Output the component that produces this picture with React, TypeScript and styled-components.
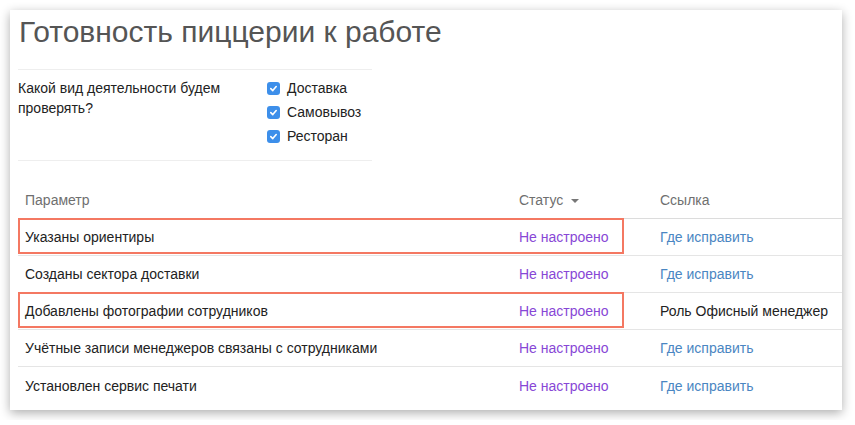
import styled, { createGlobalStyle } from 'styled-components';

const GlobalStyle = createGlobalStyle`
  html, body {
    margin: 0;
    padding: 0;
    background: #fff;
  }
  body {
    font-family: 'Liberation Sans', Arial, sans-serif;
    color: #222;
  }
`;

const Card = styled.div`
  margin: 10px;
  width: 832px;
  height: 400px;
  box-sizing: border-box;
  padding-left: 8px;
  background: #fff;
  box-shadow: 0 3px 10px rgba(0, 0, 0, 0.32);
  overflow: hidden;
`;

const Title = styled.h1`
  margin: 5px 0 0 1px;
  font-size: 30px;
  line-height: 33px;
  font-weight: 400;
  color: #555;
`;

const Filter = styled.div`
  margin-top: 21px;
  width: 354px;
  display: grid;
  grid-template-columns: 249px 1fr;
  padding: 6px 0 12px;
  border-top: 1px solid #eee;
  border-bottom: 1px solid #eee;
`;

const Question = styled.div`
  width: 230px;
  margin-top: 2px;
  font-size: 14px;
  line-height: 20px;
`;

const Options = styled.div`
  display: flex;
  flex-direction: column;
`;

const Option = styled.label`
  height: 24px;
  display: flex;
  align-items: center;
  gap: 7px;
  font-size: 14px;
`;

const Check = styled.span`
  width: 13px;
  height: 13px;
  border-radius: 3px;
  background: #3d8fea;
  display: flex;
  align-items: center;
  justify-content: center;
`;

const Table = styled.div`
  margin-top: 21px;
  font-size: 14px;
  line-height: 20px;
`;

const Row = styled.div<{ $head?: boolean }>`
  position: relative;
  display: grid;
  grid-template-columns: 494px 141px 1fr;
  height: 37px;
  box-sizing: border-box;
  align-items: center;
  border-bottom: 1px solid ${(p) => (p.$head ? '#dcdcdc' : '#e5e5e5')};
  color: ${(p) => (p.$head ? '#6f6f6f' : '#222')};
  &:last-child {
    border-bottom: none;
  }
`;

const Cell = styled.div<{ $tone?: 'status' | 'link' | 'plain' }>`
  padding: 0 7px;
  white-space: nowrap;
  display: flex;
  align-items: center;
  color: ${(p) =>
    p.$tone === 'status' ? '#8847d6' : p.$tone === 'link' ? '#4a86c2' : 'inherit'};
`;

const Caret = styled.span`
  margin-left: 8px;
  margin-top: 2px;
  width: 0;
  height: 0;
  border-left: 4px solid transparent;
  border-right: 4px solid transparent;
  border-top: 4px solid #777;
`;

const Highlight = styled.div`
  position: absolute;
  left: 0;
  top: -1px;
  width: 606px;
  height: 36px;
  box-sizing: border-box;
  border: 2px solid #f47862;
  pointer-events: none;
`;

const CheckMark = () => (
  <svg width="9" height="9" viewBox="0 0 10 10">
    <path d="M2 5.2 L4.2 7.3 L8 2.8" fill="none" stroke="#fff" strokeWidth="1.8" strokeLinecap="round" strokeLinejoin="round" />
  </svg>
);

const options = ['Доставка', 'Самовывоз', 'Ресторан'];

const rows: { name: string; link: string; isLink: boolean; marked: boolean }[] = [
  { name: 'Указаны ориентиры', link: 'Где исправить', isLink: true, marked: true },
  { name: 'Созданы сектора доставки', link: 'Где исправить', isLink: true, marked: false },
  { name: 'Добавлены фотографии сотрудников', link: 'Роль Офисный менеджер', isLink: false, marked: true },
  { name: 'Учётные записи менеджеров связаны с сотрудниками', link: 'Где исправить', isLink: true, marked: false },
  { name: 'Установлен сервис печати', link: 'Где исправить', isLink: true, marked: false },
];

export default function App() {
  return (
    <>
      <GlobalStyle />
      <Card>
        <Title>Готовность пиццерии к работе</Title>
        <Filter>
          <Question>Какой вид деятельности будем проверять?</Question>
          <Options>
            {options.map((o) => (
              <Option key={o}>
                <Check>
                  <CheckMark />
                </Check>
                {o}
              </Option>
            ))}
          </Options>
        </Filter>
        <Table>
          <Row $head>
            <Cell>Параметр</Cell>
            <Cell>
              Статус
              <Caret />
            </Cell>
            <Cell>Ссылка</Cell>
          </Row>
          {rows.map((r) => (
            <Row key={r.name}>
              <Cell>{r.name}</Cell>
              <Cell $tone="status">Не настроено</Cell>
              <Cell $tone={r.isLink ? 'link' : 'plain'}>{r.link}</Cell>
              {r.marked && <Highlight />}
            </Row>
          ))}
        </Table>
      </Card>
    </>
  );
}
